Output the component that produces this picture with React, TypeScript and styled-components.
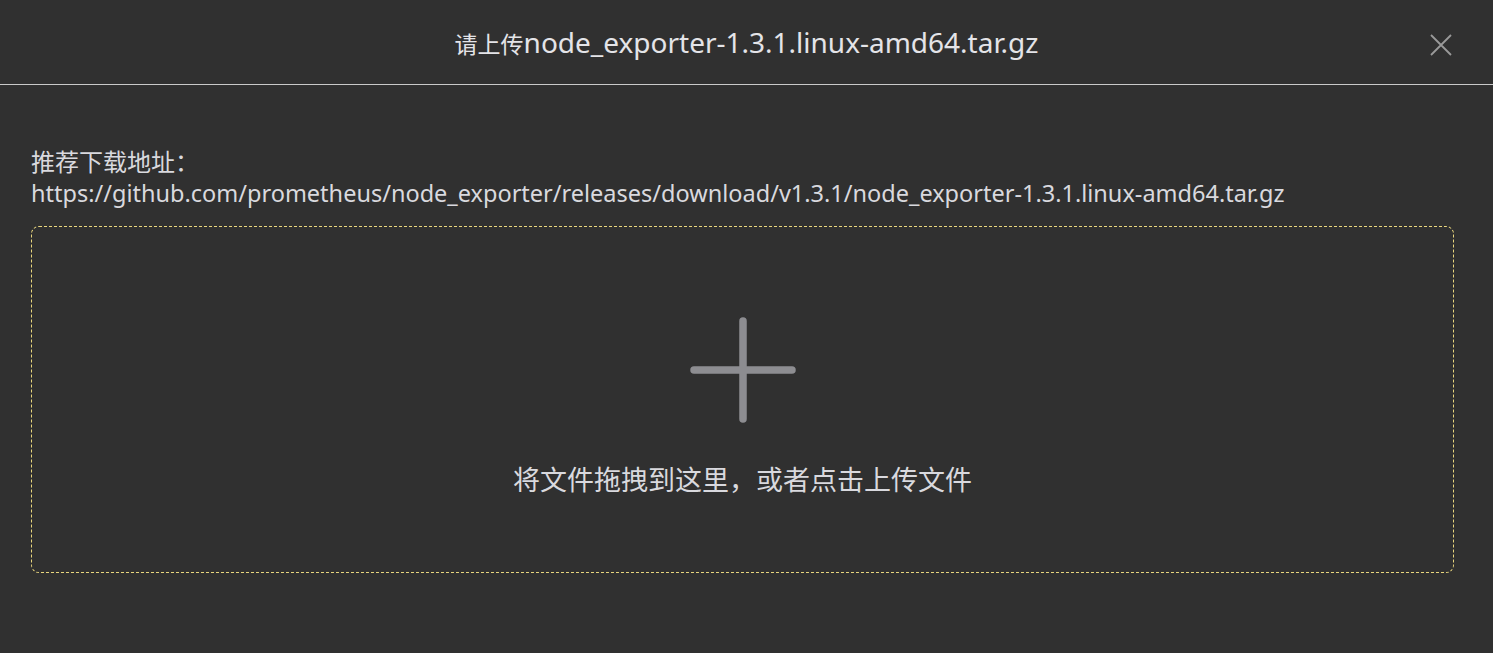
import React from "react";
import styled, { createGlobalStyle } from "styled-components";

const Global = createGlobalStyle`
  html, body { margin: 0; padding: 0; background: #303030; }
  body { font-family: "Noto Sans", "Noto Sans CJK SC", sans-serif; }
`;

const Dialog = styled.div`
  width: 1493px;
  height: 653px;
  background: #303030;
  color: #d9d9de;
  display: flex;
  flex-direction: column;
`;

const Header = styled.div`
  position: relative;
  height: 85px;
  border-bottom: 1px solid #c9c9c9;
  display: flex;
  align-items: center;
  justify-content: center;
  box-sizing: border-box;
  flex-shrink: 0;
`;

const Title = styled.h1`
  margin: 0;
  font-size: 28px;
  font-weight: 400;
  color: #e4e4e8;
  font-family: "Noto Sans", "Noto Sans CJK SC", sans-serif;
`;

const TitleCjk = styled.span`
  font-size: 23px;
  font-family: "Noto Sans CJK SC", sans-serif;
`;

const Close = styled.button`
  position: absolute;
  right: 41px;
  top: 34px;
  width: 22px;
  height: 22px;
  padding: 0;
  border: 0;
  background: transparent;
  cursor: pointer;
`;

const Body = styled.div`
  padding: 59px 39px 0 31px;
  display: flex;
  flex-direction: column;
`;

const Label = styled.div`
  font-size: 24px;
  line-height: 33px;
  font-family: "Noto Sans CJK SC", sans-serif;
`;

const Url = styled.div`
  font-size: 23.5px;
  line-height: 33px;
`;

const Drop = styled.div`
  margin-top: 16px;
  height: 347px;
  box-sizing: border-box;
  border: 1px dashed #e9d67e;
  border-radius: 8px;
  display: flex;
  flex-direction: column;
  align-items: center;
  padding-top: 90px;
`;

const Hint = styled.div`
  margin-top: 36px;
  font-size: 27px;
  font-family: "Noto Sans CJK SC", sans-serif;
  color: #d9d9de;
`;

export default function App() {
  return (
    <>
      <Global />
      <Dialog>
        <Header>
          <Title>
            <TitleCjk>请上传</TitleCjk>node_exporter-1.3.1.linux-amd64.tar.gz
          </Title>
          <Close aria-label="close">
            <svg width="22" height="22" viewBox="0 0 22 22">
              <path d="M1 1 L21 21 M21 1 L1 21" stroke="#9a9a9a" strokeWidth="1.8" />
            </svg>
          </Close>
        </Header>
        <Body>
          <Label>推荐下载地址：</Label>
          <Url>https://github.com/prometheus/node_exporter/releases/download/v1.3.1/node_exporter-1.3.1.linux-amd64.tar.gz</Url>
          <Drop>
            <svg width="106" height="106" viewBox="0 0 106 106">
              <path d="M53 4 V102 M4 53 H102" stroke="#8d8d91" strokeWidth="7.5" strokeLinecap="round" />
            </svg>
            <Hint>将文件拖拽到这里，或者点击上传文件</Hint>
          </Drop>
        </Body>
      </Dialog>
    </>
  );
}
